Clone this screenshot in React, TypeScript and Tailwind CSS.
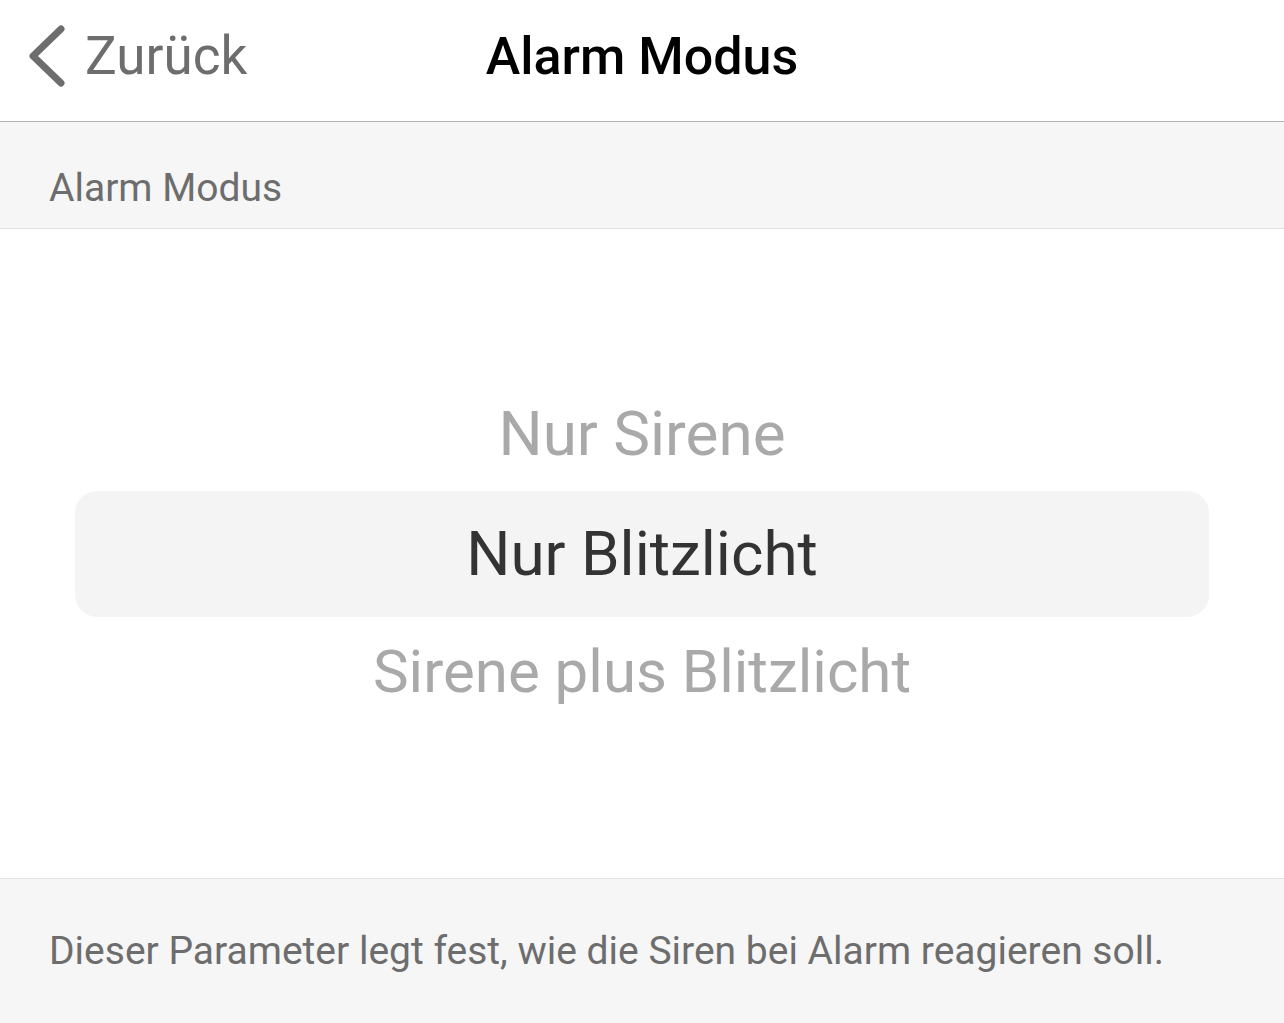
export default function App() {
  return (
    <div
      className="w-[1284px] h-[1023px] flex flex-col bg-white overflow-hidden"
      style={{ fontFamily: "Roboto, 'Liberation Sans', sans-serif" }}
    >
      {/* Nav bar */}
      <div className="h-[122px] shrink-0 relative flex items-center pb-[8px] border-b border-[#b3b3b3]">
        <div className="flex items-center pl-[25px] gap-[18px] text-[#6d6d6d]">
          <svg width="42" height="64" viewBox="0 0 42 64" fill="none">
            <path
              d="M36 4L8 31L36 58"
              stroke="currentColor"
              strokeWidth="7"
              strokeLinecap="round"
              strokeLinejoin="round"
            />
          </svg>
          <span className="text-[53px] leading-none">Zurück</span>
        </div>
        <div className="absolute inset-0 pb-[8px] flex items-center justify-center pointer-events-none">
          <span className="text-[52px] leading-none font-medium text-black">Alarm Modus</span>
        </div>
      </div>

      {/* Section header */}
      <div className="h-[107px] shrink-0 bg-[#f6f6f6] border-b border-[#e3e3e3] flex items-center pl-[49px]">
        <span className="text-[39px] leading-none text-[#6d6d6d] pt-[26px]">Alarm Modus</span>
      </div>

      {/* Picker */}
      <div className="flex-1 flex flex-col items-center justify-center pb-[8px]">
        <div className="text-[62px] leading-none text-[#a9a9a9] h-[118px] flex items-center pt-[4px]">Nur Sirene</div>
        <div className="w-[1134px] h-[126px] rounded-[22px] bg-[#f4f4f4] flex items-center justify-center">
          <span className="text-[62px] leading-none text-[#333333]">Nur Blitzlicht</span>
        </div>
        <div className="text-[60px] leading-none text-[#a9a9a9] h-[110px] flex items-center">Sirene plus Blitzlicht</div>
      </div>

      {/* Footer */}
      <div className="h-[145px] shrink-0 bg-[#f6f6f6] border-t border-[#e3e3e3] flex items-center pl-[49px]">
        <span className="text-[39px] leading-none text-[#6d6d6d] whitespace-nowrap">
          Dieser Parameter legt fest, wie die Siren bei Alarm reagieren soll.
        </span>
      </div>
    </div>
  );
}
